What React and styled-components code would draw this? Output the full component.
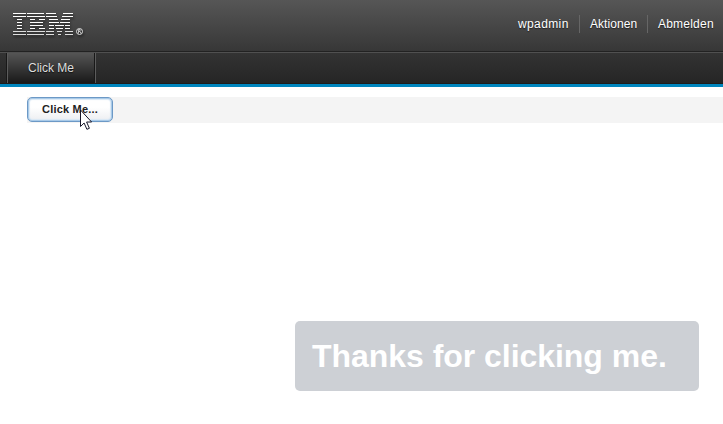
import React from "react";
import styled, { createGlobalStyle } from "styled-components";

const GlobalStyle = createGlobalStyle`
  * { box-sizing: border-box; }
  body {
    margin: 0;
    background: #fff;
    font-family: "Liberation Sans", Arial, sans-serif;
    font-size: 12px;
    overflow: hidden;
  }
`;

const Page = styled.div`
  height: 424px;
  display: flex;
  flex-direction: column;
`;

const Banner = styled.header`
  height: 52px;
  flex: none;
  display: flex;
  justify-content: space-between;
  align-items: flex-start;
  padding: 11px 0 0 11px;
  background: linear-gradient(#565656, #373737);
  border-bottom: 1px solid #222;
`;

const Logo = styled.svg`
  display: block;
  filter: drop-shadow(1px 2px 1px rgba(0, 0, 0, 0.55));
`;

const UserLinks = styled.nav`
  display: flex;
  margin-top: 4px;
`;

const UserLink = styled.a`
  height: 18px;
  width: ${(p) => p.$width}px;
  padding-left: 10px;
  line-height: 18px;
  color: #fff;
  letter-spacing: ${(p) => p.$tracking || 0}px;
  white-space: nowrap;
  text-shadow: 0 1px 1px #222;
  & + & { border-left: 1px solid #666; }
`;

const NavBar = styled.nav`
  height: 35px;
  flex: none;
  display: flex;
  padding-left: 7px;
  background: linear-gradient(#333, #252525);
  border-top: 1px solid #505050;
  border-bottom: 3px solid #0086be;
  box-shadow: inset 0 -1px #1d1d1d;
`;

const Tab = styled.a`
  width: 89px;
  height: 30px;
  line-height: 30px;
  text-align: center;
  text-indent: -1px;
  color: #dedede;
  background: linear-gradient(#555, #191919);
  border: solid #5c5c5c;
  border-width: 0 1px;
  box-shadow: -1px 0 #181818, inset -1px 0 #181818;
  text-shadow: 0 1px 1px #111;
`;

const Toolbar = styled.div`
  height: 26px;
  margin: 10px 0 0 27px;
  background: #f4f4f4;
`;

const ButtonWrap = styled.div`
  position: relative;
  width: 86px;
`;

const Button = styled.button`
  display: block;
  width: 86px;
  height: 25px;
  padding: 0 0 1px;
  font: bold 11px "Liberation Sans", Arial, sans-serif;
  letter-spacing: 0.2px;
  color: #222;
  background: linear-gradient(#fff 40%, #eceef1);
  border: 1px solid #6c99c6;
  border-radius: 5px;
  box-shadow: inset 0 0 0 1px #a9cae8, inset 0 0 1px 2px #d9e8f5;
`;

const Cursor = styled.svg`
  position: absolute;
  left: 53px;
  top: 12px;
`;

const Notice = styled.div`
  width: 404px;
  height: 70px;
  margin: 198px 0 0 295px;
  padding-left: 17px;
  line-height: 70px;
  border-radius: 5px;
  background: #cdd0d5;
  color: #fff;
  font-size: 32px;
  font-weight: bold;
  letter-spacing: -0.04px;
  white-space: nowrap;
`;

const logoRows = [
  [[2, 13], [16, 17], [35, 10], [52, 10]],
  [[2, 13], [16, 18], [35, 11], [51, 11]],
  [[6, 5], [19, 5], [28, 6], [38, 9], [50, 9]],
  [[6, 5], [19, 13], [38, 10], [49, 10]],
  [[6, 5], [19, 13], [38, 5], [44, 9], [54, 5]],
  [[6, 5], [19, 5], [28, 6], [38, 5], [45, 7], [54, 5]],
  [[2, 13], [16, 18], [35, 8], [46, 5], [54, 8]],
  [[2, 13], [16, 17], [35, 8], [47, 3], [54, 8]],
];

function IbmLogo() {
  return (
    <Logo width="78" height="32" viewBox="0 0 78 32" aria-label="IBM">
      {logoRows.map((row, i) =>
        row.map(([x, w]) => (
          <rect key={`${i}-${x}`} x={x} y={2 + i * 3} width={w} height="1" fill={i < 6 ? "#fff" : "#ddd"} />
        ))
      )}
      <circle cx="68.5" cy="20.5" r="3" fill="none" stroke="#ddd" strokeWidth="1" />
      <path d="M67.5 22.5v-4h1.5v2h-1.5M69 20.5l1 2" fill="none" stroke="#ddd" strokeWidth="0.8" />
    </Logo>
  );
}

export default function App() {
  return (
    <>
      <GlobalStyle />
      <Page>
        <Banner>
          <IbmLogo />
          <UserLinks>
            <UserLink $width={71} $tracking={0.38}>wpadmin</UserLink>
            <UserLink $width={68} $tracking={0.05}>Aktionen</UserLink>
            <UserLink $width={76} $tracking={0.22}>Abmelden</UserLink>
          </UserLinks>
        </Banner>
        <NavBar>
          <Tab>Click Me</Tab>
        </NavBar>
        <Toolbar>
          <ButtonWrap>
            <Button>Click Me...</Button>
            <Cursor width="13" height="22" viewBox="0 0 13 22">
              <path d="M.5 1v16.5l3.6-3.5 2.8 6.3 2.5-1-2.8-6.3h5z" fill="#fff" stroke="#17172a" />
            </Cursor>
          </ButtonWrap>
        </Toolbar>
        <Notice>Thanks for clicking me.</Notice>
      </Page>
    </>
  );
}
